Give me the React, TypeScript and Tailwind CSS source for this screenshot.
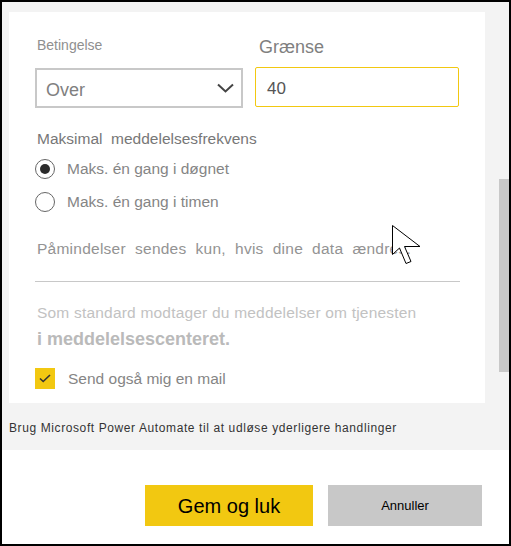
import React from 'react'

const font = "font-['Liberation_Sans',Arial,sans-serif]"

function Radio({ checked, label }: { checked?: boolean; label: string }) {
  return (
    <div className="flex items-center gap-[12px] h-[20px]">
      <div className="w-[20px] h-[20px] rounded-full border border-[#666] bg-white flex items-center justify-center">
        {checked && <div className="w-[10px] h-[10px] rounded-full bg-[#2b2b2b]" />}
      </div>
      <span className="text-[15.5px] leading-[20px] text-[#858585]">{label}</span>
    </div>
  )
}

function Cursor() {
  return (
    <svg
      className="absolute left-[390px] top-[223px]"
      width="30"
      height="42"
      viewBox="0 0 30 42"
    >
      <path
        d="M0.5 0.5 L0.5 29.5 L7.5 23 L14 38.5 L19 36.5 L12.5 21.5 L28 21.5 Z"
        fill="#fff"
        stroke="#000"
        strokeWidth="1"
        strokeLinejoin="miter"
      />
    </svg>
  )
}

export default function App() {
  return (
    <div className={`relative w-[511px] h-[546px] border-2 border-black bg-white flex flex-col ${font}`}>
      {/* Scrollable panel */}
      <div className="h-[448px] bg-[#f3f3f3] flex flex-col">
        <div className="flex pt-[10px] pl-[7px]">
          <div className="w-[476px] h-[391px] bg-white pl-[26px] pr-[25px] flex flex-col">
            <div className="flex gap-[12px]">
              <div className="w-[208px] pt-[23px] flex flex-col">
                <span className="pl-[2px] text-[14px] leading-[20px] text-[#8f8f8f]">Betingelse</span>
                <div className="mt-[13px] h-[40px] border-2 border-[#c8c8c8] pl-[9px] pr-[7px] flex items-center justify-between">
                  <span className="text-[18px] leading-[24px] text-[#808080] mt-[4px]">Over</span>
                  <svg width="17" height="10" viewBox="0 0 17 10">
                    <path d="M1 1.5 L8.5 8.5 L16 1.5" fill="none" stroke="#444" strokeWidth="2" />
                  </svg>
                </div>
              </div>
              <div className="w-[204px] pt-[24px] flex flex-col">
                <span className="pl-[4px] text-[18px] leading-[22px] text-[#808080]">Grænse</span>
                <div className="mt-[9px] h-[40px] border border-[#f2c811] rounded-[2px] pl-[11px] flex items-center">
                  <span className="text-[17px] leading-[24px] text-[#555] mt-[3px]">40</span>
                </div>
              </div>
            </div>

            <span className="pl-[2px] mt-[21px] text-[15.5px] leading-[20px] text-[#777] whitespace-pre">
              {'Maksimal  meddelelsesfrekvens'}
            </span>
            <div className="mt-[10px]">
              <Radio checked label="Maks. én gang i døgnet" />
            </div>
            <div className="mt-[13px]">
              <Radio label="Maks. én gang i timen" />
            </div>

            <span className="pl-[2px] mt-[27px] text-[15.5px] leading-[20px] tracking-[0.25px] text-[#939393] whitespace-pre">
              {'Påmindelser  sendes  kun,  hvis  dine  data  ændres.'}
            </span>

            <div className="mt-[22px] h-px bg-[#c8c8c8]" />

            <span className="pl-[2px] mt-[21px] text-[15.5px] leading-[20px] tracking-[0.2px] text-[#c2c2c2]">
              Som standard modtager du meddelelser om tjenesten
            </span>
            <span className="pl-[2px] mt-[4px] text-[18px] leading-[24px] font-bold text-[#bababa]">
              i meddelelsescenteret.
            </span>

            <div className="mt-[17px] flex items-center gap-[13px]">
              <div className="w-[20px] h-[21px] bg-[#f2c811] flex items-center justify-center">
                <svg width="12" height="9" viewBox="0 0 12 9">
                  <path d="M1 4.5 L4.2 7.5 L11 1" fill="none" stroke="#333" strokeWidth="1.6" />
                </svg>
              </div>
              <span className="text-[15.5px] leading-[20px] text-[#858585]">Send også mig en mail</span>
            </div>
          </div>

          {/* Scrollbar */}
          <div className="flex-1 flex justify-end">
            <div className="mt-[167px] w-[10px] h-[193px] bg-[#c8c8c8]" />
          </div>
        </div>

        <span className="mt-[17px] pl-[7px] text-[12px] leading-[16px] tracking-[0.6px] text-[#333]">
          Brug Microsoft Power Automate til at udløse yderligere handlinger
        </span>
      </div>

      {/* Footer buttons */}
      <div className="flex justify-end gap-[15px] pr-[27px] mt-[35px]">
        <button className="w-[168px] h-[41px] bg-[#f2c811] text-[20px] text-black">Gem og luk</button>
        <button className="w-[154px] h-[41px] bg-[#c8c8c8] text-[13px] text-black">Annuller</button>
      </div>

      <Cursor />
    </div>
  )
}
